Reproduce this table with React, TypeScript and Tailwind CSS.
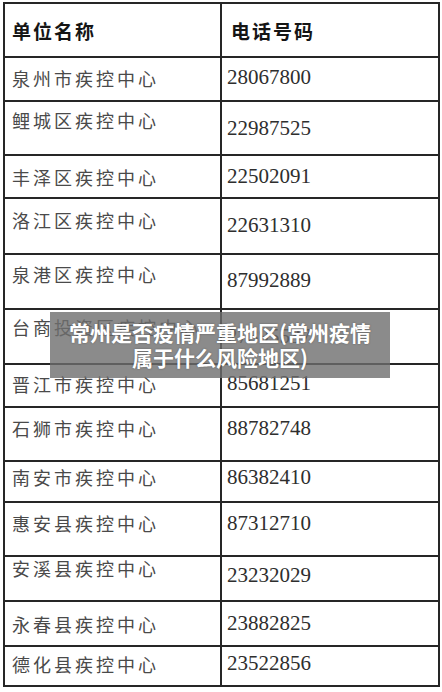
import React from "react";

type Row = { name: string; tel: string; h: number; l: number; r: number };

// h = row height incl. bottom rule, l / r = text offset inside the row
const rows: Row[] = [
  { name: "泉州市疾控中心", tel: "28067800", h: 44, l: 11, r: 9 },
  { name: "鲤城区疾控中心", tel: "22987525", h: 54, l: 9, r: 16 },
  { name: "丰泽区疾控中心", tel: "22502091", h: 43, l: 12, r: 10 },
  { name: "洛江区疾控中心", tel: "22631310", h: 56, l: 12, r: 16 },
  { name: "泉港区疾控中心", tel: "87992889", h: 55, l: 10, r: 15 },
  { name: "台商投资区疾控中心", tel: "27395537", h: 55, l: 8, r: 16 },
  { name: "晋江市疾控中心", tel: "85681251", h: 43, l: 10, r: 8 },
  { name: "石狮市疾控中心", tel: "88782748", h: 54, l: 11, r: 10 },
  { name: "南安市疾控中心", tel: "86382410", h: 41, l: 6, r: 5 },
  { name: "惠安县疾控中心", tel: "87312710", h: 54, l: 11, r: 10 },
  { name: "安溪县疾控中心", tel: "23232029", h: 45, l: 2, r: 8 },
  { name: "永春县疾控中心", tel: "23882825", h: 45, l: 13, r: 11 },
  { name: "德化县疾控中心", tel: "23522856", h: 38, l: 8, r: 6 },
];

const cjk = { fontFamily: '"Noto Sans CJK SC", "Noto Sans", sans-serif' };
const serif = { fontFamily: '"Liberation Serif", "Noto Sans CJK SC", serif' };

export default function App() {
  return (
    <div className="relative w-[442px] h-[692px] bg-white overflow-hidden">
      <div className="ml-[3px] mt-[2px] w-[437px] border-2 border-[#262626]">
        {/* header */}
        <div className="flex h-[54px] border-b-2 border-[#262626]">
          <div className="w-[217px] shrink-0 border-r-2 border-[#262626] pl-[7px] pt-[17px]">
            <span className="block text-[19px] leading-[19px] font-bold tracking-[2px] text-[#151515]" style={cjk}>
              单位名称
            </span>
          </div>
          <div className="flex-1 pl-[9px] pt-[17px]">
            <span className="block text-[19px] leading-[19px] font-bold tracking-[2px] text-[#151515]" style={cjk}>
              电话号码
            </span>
          </div>
        </div>

        {rows.map((row, i) => (
          <div
            key={row.name}
            className={
              i === rows.length - 1
                ? "flex"
                : "flex border-b-2 border-[#262626]"
            }
            style={{ height: row.h }}
          >
            <div className="w-[217px] shrink-0 border-r-2 border-[#262626] pl-[7px]">
              <span
                className="block text-[18px] leading-[18px] tracking-[3px] text-[#4a4a4a] whitespace-nowrap"
                style={{ ...cjk, paddingTop: row.l }}
              >
                {row.name}
              </span>
            </div>
            <div className="flex-1 pl-[5px]">
              <span
                className="block text-[21px] leading-[21px] text-[#2e2e2e]"
                style={{ ...serif, paddingTop: row.r }}
              >
                {row.tel}
              </span>
            </div>
          </div>
        ))}
      </div>

      {/* caption overlay */}
      <div className="absolute left-[50px] top-[312px] w-[340px] h-[66px] bg-[rgba(110,110,110,0.8)] flex flex-col items-center justify-center">
        <p
          className="text-[21px] leading-[25px] font-bold text-white text-center [text-shadow:0_0_2px_rgba(0,0,0,0.35)]"
          style={cjk}
        >
          常州是否疫情严重地区(常州疫情
          <br />
          属于什么风险地区)
        </p>
      </div>
    </div>
  );
}
